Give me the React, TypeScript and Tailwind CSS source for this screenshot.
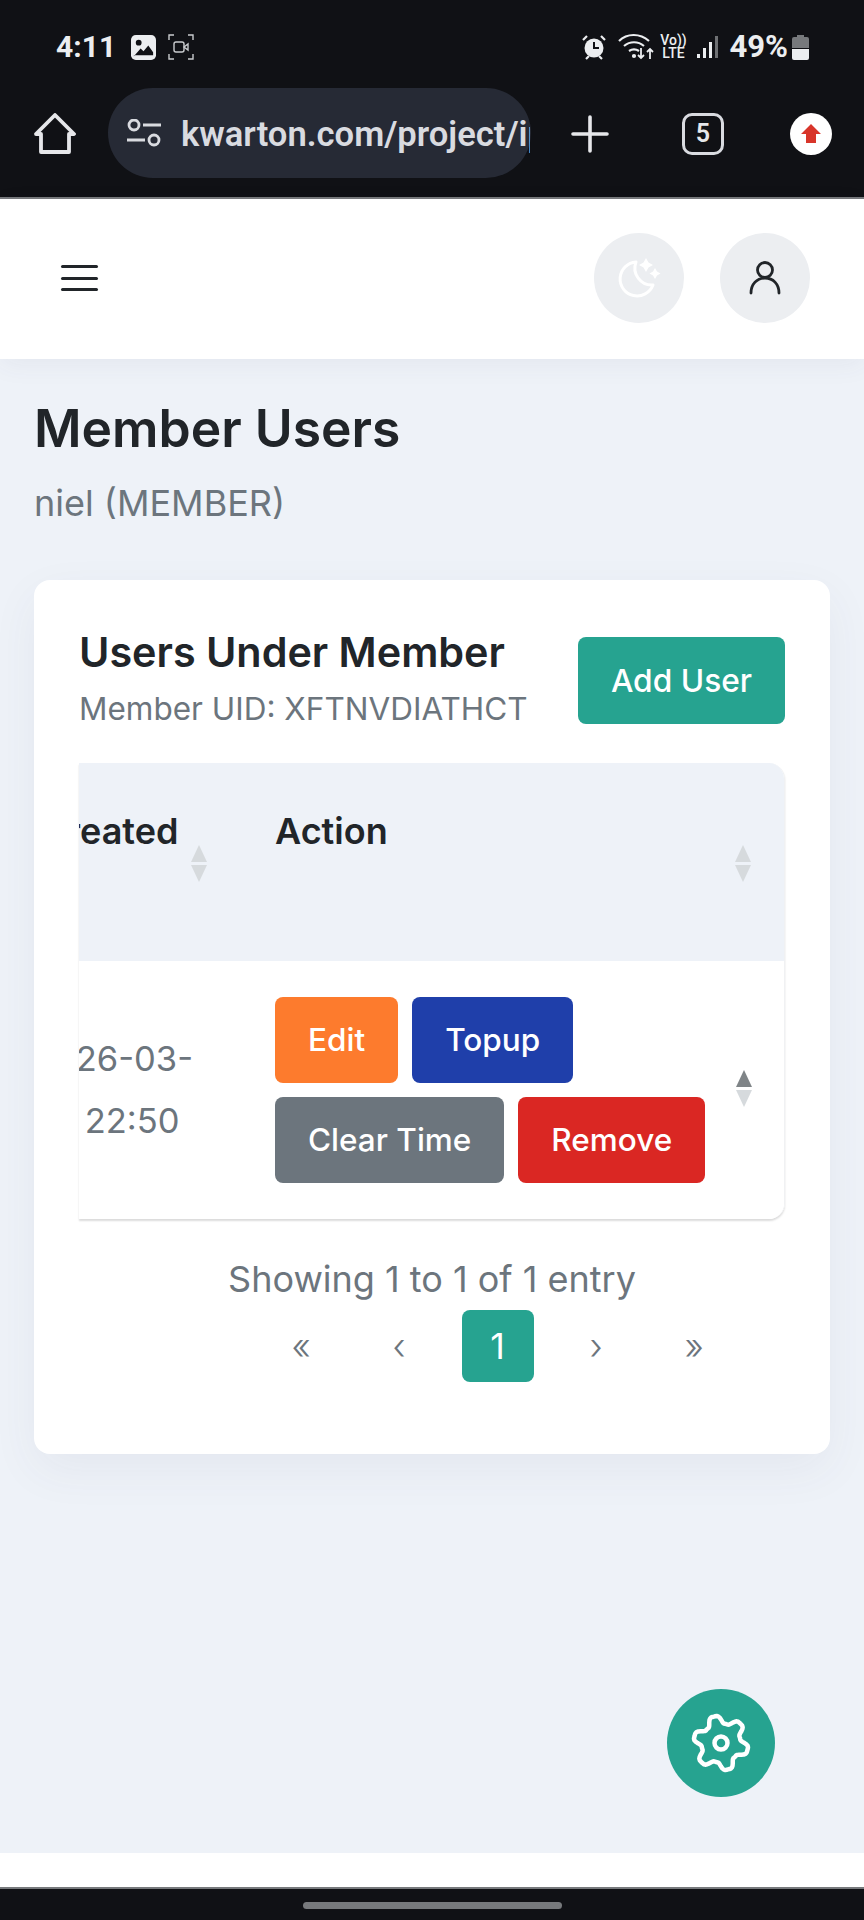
const SortArrows = ({ dark = false, className = "" }: { dark?: boolean; className?: string }) => (
  <div className={`absolute flex flex-col gap-[3px] ${className}`}>
    <div className={`w-0 h-0 border-x-[8.5px] border-x-transparent border-b-[17px] ${dark ? "border-b-[#7f8487]" : "border-b-[#d6dadd]"}`} />
    <div className="w-0 h-0 border-x-[8.5px] border-x-transparent border-t-[17px] border-t-[#d6dadd]" />
  </div>
);

// wavy six lobed outline of the settings gear
const gearPath =
  Array.from({ length: 120 }, (_, i) => {
    const a = (i * 3 * Math.PI) / 180;
    const x = 6 * (a - Math.PI / 12);
    const r = 23.5 + 4.5 * (Math.cos(x) - 0.15 * Math.cos(3 * x));
    return `${i === 0 ? "M" : "L"}${(30 + r * Math.cos(a)).toFixed(2)} ${(30 + r * Math.sin(a)).toFixed(2)}`;
  }).join(" ") + " Z";

const StatusBar = () => (
  <div className="h-[88px] flex items-start justify-between pl-[56px] pr-[55px] pt-[32px] text-[#eceef0]">
    <div className="flex items-center h-[30px]">
      <span className="text-[30px] leading-[30px] font-bold font-['Roboto',sans-serif]">4:11</span>
      <svg className="ml-[15px]" width="25" height="25" viewBox="0 0 26 26">
        <rect width="26" height="26" rx="5" fill="#eceef0" />
        <circle cx="8" cy="8" r="3" fill="#101115" />
        <path d="M3 22 L10 14 L13 17 L18 11 L23 18 V21 H3 Z" fill="#101115" />
      </svg>
      <svg className="ml-[12px]" width="26" height="26" viewBox="0 0 26 26" fill="none" stroke="#c9cbce" strokeWidth="1.4">
        <path d="M1 6V1h5M20 1h5v5M25 20v5h-5M6 25H1v-5" />
        <rect x="6" y="8" width="10" height="10" rx="2" />
        <path d="M16 13l4-3v6z" />
      </svg>
    </div>
    <div className="flex items-center h-[30px]">
      <svg width="24" height="26" viewBox="0 0 24 26">
        <path d="M1 6l4-4M23 6l-4-4M4 25l3-3M20 25l-3-3" stroke="#eceef0" strokeWidth="2.2" fill="none" />
        <circle cx="12" cy="14" r="9.5" fill="#eceef0" />
        <path d="M12 8v6h5" stroke="#101115" strokeWidth="2" fill="none" />
      </svg>
      <svg className="ml-[12px]" width="36" height="28" viewBox="0 0 36 28" fill="none" stroke="#eceef0" strokeWidth="2.2">
        <path d="M1 8C9 0 22 0 31 8" />
        <path d="M6 13c6-5 14-5 20 0" />
        <path d="M11 18c3-2 7-2 10 0" />
        <circle cx="16" cy="23" r="1" fill="#eceef0" />
        <path d="M23 15v10M20 22l3 3 3-3M32 26V16M29 19l3-3 3 3" strokeWidth="1.8" />
      </svg>
      <div className="ml-[7px] w-[26px] flex flex-col items-center text-[14px] leading-[13px] font-medium font-['Roboto',sans-serif]">
        <span>Vo))</span>
        <span>LTE</span>
      </div>
      <svg className="ml-[10px]" width="22" height="24" viewBox="0 0 22 24">
        <rect x="0" y="19" width="3" height="4" fill="#eceef0" />
        <rect x="6" y="13" width="3" height="10" fill="#eceef0" />
        <rect x="12" y="7" width="3" height="16" fill="#eceef0" />
        <rect x="18" y="1" width="3" height="22" fill="#6e7073" />
      </svg>
      <span className="ml-[11px] text-[31px] leading-[30px] font-bold font-['Roboto',sans-serif]">49%</span>
      <svg className="ml-[4px]" width="17" height="25" viewBox="0 0 17 25">
        <path d="M5 0h7v2h3a2 2 0 0 1 2 2v9H0V4a2 2 0 0 1 2-2h3z" fill="#77797c" />
        <path d="M0 14h17v9a2 2 0 0 1-2 2H2a2 2 0 0 1-2-2z" fill="#eceef0" />
      </svg>
    </div>
  </div>
);

const BrowserBar = () => (
  <div className="h-[111px] flex items-start pl-[34px] border-b-2 border-[#77797c] text-[#e6e7ea]">
    <svg className="mt-[25px]" width="42" height="42" viewBox="0 0 42 42" fill="none" stroke="#e6e7ea" strokeWidth="3.8" strokeLinejoin="round">
      <path d="M2 21 L21 2 L40 21 H35 V39 H7 V21 Z" />
    </svg>
    <div className="ml-[32px] w-[423px] h-[90px] rounded-[45px] bg-[#262a35] flex items-center pl-[19px] pr-[1px]">
      <svg className="shrink-0" width="34" height="28" viewBox="0 0 34 28" fill="none" stroke="#d9dbe0" strokeWidth="2.8">
        <circle cx="7" cy="6" r="5" />
        <path d="M16 6h18M0 21h18" />
        <circle cx="27" cy="21" r="5" />
      </svg>
      <div className="ml-[20px] pt-[3px] overflow-hidden whitespace-nowrap text-[34.600px] font-semibold font-['Roboto',sans-serif] text-[#d9dbe0]">
        kwarton.com/project/ip
      </div>
    </div>
    <svg className="ml-[40px] mt-[27px]" width="38" height="38" viewBox="0 0 38 38" stroke="#e6e7ea" strokeWidth="3.6" strokeLinecap="round">
      <path d="M19 2v34M2 19h34" />
    </svg>
    <div className="ml-[73px] mt-[25px] w-[42px] h-[42px] rounded-[10px] border-[3.4px] border-[#d9dbe0] flex items-center justify-center text-[25px] font-semibold font-['Roboto',sans-serif]">
      5
    </div>
    <div className="ml-[66px] mt-[25px] w-[42px] h-[42px] rounded-full bg-white flex items-center justify-center">
      <svg width="22" height="22" viewBox="0 0 22 22">
        <path d="M11 1 L21 11 H16 V20 H6 V11 H1 Z" fill="#d8352a" />
      </svg>
    </div>
  </div>
);

const Header = () => (
  <div className="h-[160px] shrink-0 bg-white flex items-center justify-between pl-[61px] pr-[54px] pb-[2px] shadow-[0_6px_24px_rgba(60,70,100,0.06)] relative">
    <div className="flex flex-col gap-[8.5px]">
      <div className="w-[37px] h-[3px] rounded bg-[#212529]" />
      <div className="w-[37px] h-[3px] rounded bg-[#212529]" />
      <div className="w-[37px] h-[3px] rounded bg-[#212529]" />
    </div>
    <div className="flex gap-[36px]">
      <div className="w-[90px] h-[90px] rounded-full bg-[#eceef1] flex items-center justify-center">
        <svg width="44" height="44" viewBox="0 0 44 44" fill="none" stroke="#fff" strokeWidth="3">
          <path d="M19 6 A17 17 0 1 0 36 29 A17 17 0 0 1 19 6 Z" strokeLinejoin="round" />
          <path d="M29 2l2.5 4.5L36 9l-4.500 2.500L29 16l-2.500-4.500L22 9l4.500-2.500z" fill="#fff" stroke="none" />
          <path d="M38 12l2 3.500 3.500 2-3.500 2-2 3.500-2-3.500-3.500-2 3.500-2z" fill="#fff" stroke="none" />
        </svg>
      </div>
      <div className="w-[90px] h-[90px] rounded-full bg-[#eceef1] flex items-center justify-center">
        <svg width="34" height="36" viewBox="0 0 34 36" fill="none" stroke="#212529" strokeWidth="2.8" strokeLinecap="round">
          <circle cx="17" cy="10" r="7.500" />
          <path d="M3 33c0-9 6-15 14-15s14 6 14 15" />
        </svg>
      </div>
    </div>
  </div>
);

const ActionButton = ({ label, color }: { label: string; color: string }) => (
  <button className={`h-[86px] px-[33px] rounded-[8px] text-white text-[31.500px] font-medium ${color}`}>{label}</button>
);

const UsersCard = () => (
  <div className="mt-[54px] bg-white rounded-[16px] h-[874px] px-[45px] pt-[57px] shadow-[0_16px_48px_rgba(60,70,110,0.06)]">
    <div className="flex items-start justify-between">
      <div>
        <h2 className="text-[41.300px] leading-[50px] font-semibold text-[#212529] -mt-[10px]">Users Under Member</h2>
        <p className="text-[31.500px] leading-[40px] mt-[12px] text-[#6c757d]">Member UID: XFTNVDIATHCT</p>
      </div>
      <button className="w-[207px] h-[87px] rounded-[8px] bg-[#26a390] text-white text-[31.700px] font-medium">Add User</button>
    </div>

    <div className="mt-[34px] rounded-r-[16px] overflow-hidden shadow-[0_2px_2px_rgba(0,0,0,0.14)] border-r border-[#f0f1f3]">
      <div className="flex h-[198px] bg-[#eef2f8] text-[36px] font-semibold text-[#212529] relative">
        <div className="-ml-[46px] w-[242px] shrink-0 pl-[7px] pt-[44px] leading-[48px]">Created</div>
        <div className="pt-[44px] leading-[48px]">Action</div>
        <SortArrows className="left-[112px] top-[82px]" />
        <SortArrows className="left-[656px] top-[82px]" />
      </div>
      <div className="flex h-[258px] bg-white relative">
        <div className="-ml-[46px] w-[242px] shrink-0 pt-[67px] text-[34.500px] leading-[62px] text-[#6c757d]">
          <div>2026-03-</div>
          <div>25 22:50</div>
        </div>
        <div className="pt-[36px] w-[440px] flex flex-wrap gap-[14px] content-start">
          <ActionButton label="Edit" color="bg-[#fd7b2d]" />
          <ActionButton label="Topup" color="bg-[#1f3faa]" />
          <ActionButton label="Clear Time" color="bg-[#6c757d]" />
          <ActionButton label="Remove" color="bg-[#da2723]" />
        </div>
        <SortArrows dark className="left-[657px] top-[109px]" />
      </div>
    </div>

    <div className="mt-[38px] text-center text-[36px] leading-[44px] text-[#6c757d]">Showing 1 to 1 of 1 entry</div>
    <div className="mt-[9px] flex items-center justify-center pl-[131px] gap-[27px] text-[36px] font-light text-[#6c757d]">
      <span className="w-[71px] text-center">«</span>
      <span className="w-[71px] text-center">‹</span>
      <span className="w-[72px] h-[72px] rounded-[8px] bg-[#26a390] text-white font-normal flex items-center justify-center">1</span>
      <span className="w-[71px] text-center">›</span>
      <span className="w-[71px] text-center">»</span>
    </div>
  </div>
);

export default function App() {
  return (
    <div className="w-[864px] h-[1920px] flex flex-col overflow-hidden bg-[#101115] font-['Inter',sans-serif] relative">
      <StatusBar />
      <BrowserBar />
      <Header />
      <main className="flex-1 bg-[#eef2f8] px-[34px]">
        <h1 className="pt-[36px] text-[51.600px] leading-[66px] font-semibold text-[#212529]">Member Users</h1>
        <p className="mt-[19px] text-[36px] leading-[46px] text-[#6c757d]">niel (MEMBER)</p>
        <UsersCard />
      </main>
      <div className="h-[34px] shrink-0 bg-white border-b-2 border-[#77797c] box-content" />
      <div className="h-[31px] shrink-0 flex justify-center pt-[13px]">
        <div className="w-[259px] h-[7px] rounded-full bg-[#77797c]" />
      </div>
      <div className="absolute left-[667px] top-[1689px] w-[108px] h-[108px] rounded-full bg-[#26a390] flex items-center justify-center">
        <svg width="60" height="60" viewBox="0 0 60 60" fill="none" stroke="#fff" strokeWidth="4.500" strokeLinejoin="round">
          <path d={gearPath} />
          <circle cx="30" cy="30" r="6.500" />
        </svg>
      </div>
    </div>
  );
}
